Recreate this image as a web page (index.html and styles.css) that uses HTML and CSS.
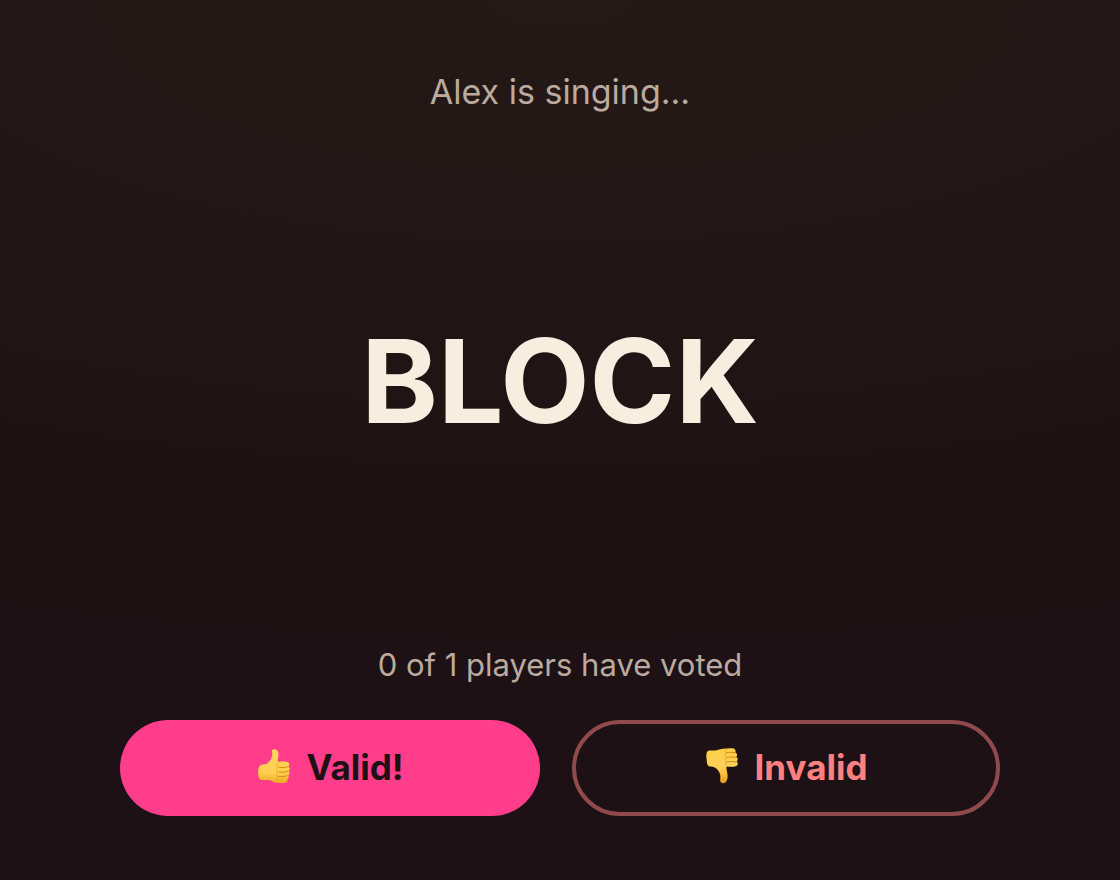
FILE: index.html
```html
<!DOCTYPE html>
<html lang="en">
<head>
  <meta charset="UTF-8">
  <meta name="viewport" content="width=device-width, initial-scale=1">
  <title>Vote</title>
  <link rel="stylesheet" href="styles.css">
</head>
<body>
  <main class="screen">
    <p class="status">Alex is singing...</p>
    <h1 class="word">BLOCK</h1>
    <section class="voting">
      <p class="count">0 of 1 players have voted</p>
      <div class="vote-buttons">
        <button class="button valid" type="button">
          <svg class="thumb" viewBox="7 8 34 38" aria-hidden="true">
            <defs>
              <linearGradient id="skin-up" x1="0" y1="0" x2="0" y2="1">
                <stop offset="0" stop-color="#ffd55c"/>
                <stop offset="0.7" stop-color="#ffcf50"/>
                <stop offset="1" stop-color="#eda820"/>
              </linearGradient>
            </defs>
            <path fill="url(#skin-up)" d="M23 10.500c.8-1.700 3.400-1.800 4.800-.4 1.700 1.700 2 4.400 1.500 7-.3 1.700-.6 3.300-.2 4.900 2.900-.5 6.900-.6 9.300.1 2.300.7 2.600 3.200.9 4.500 1.800.9 1.900 3.400.3 4.500 1.300 1.100 1.200 3.200-.4 4.200.8 1.200.7 3-.8 3.700 .6 1.700-.4 3.500-2.300 3.800-3.300.5-7.600.4-10.600-.5-2.300-.7-3.600-1.900-5.500-2.200-2.600-.4-5.500.1-8-.4-2.200-.5-3-3.500-2.900-7.200.1-4 .9-7 3.500-7.700 2.200-.6 4.400-.1 5.900-1.500 2.100-2 4.100-4.700 4.700-7.600.4-2-.5-4 -.2-5.200z"/>
            <path fill="none" stroke="#d18a17" stroke-width="1" stroke-linecap="round" d="M30 27.200c3 .5 6.500.3 9-.5M30 32c3 .5 6.500.2 9-.7M29.500 36.300c3 .5 6.300.3 8.600-.7"/>
            <path fill="none" stroke="#e5a52b" stroke-width=".8" stroke-linecap="round" d="M29 22.300c-1.800 1-2 3.600-.5 4.800-1.200 1.300-1.200 3.700 0 4.800-1 1.200-1 3.100.2 4.300-.8 1.400-.5 3 .6 4"/>
          </svg>
          <span>Valid!</span>
        </button>
        <button class="button invalid" type="button">
          <svg class="thumb" viewBox="7 8 34 38" aria-hidden="true">
            <defs>
              <linearGradient id="skin-down" x1="0" y1="0" x2="0" y2="1">
                <stop offset="0" stop-color="#ffce45"/>
                <stop offset="0.5" stop-color="#ffd35a"/>
                <stop offset="0.75" stop-color="#f9bc36"/>
                <stop offset="1" stop-color="#e89a16"/>
              </linearGradient>
            </defs>
            <path fill="url(#skin-down)" d="M9.500 18.500C8.900 14 9.600 11 12.200 10.600c2.600-.4 5.200.3 8.200-.6 4.600-1.400 10.300-2.200 15-1.700 2.600.3 3.700 2.100 2.900 4.200 1.900.7 2.300 3 1 4.400 1.700 1 1.900 3.200.4 4.500 1.800 1.200 1.300 4.300-1 4.900-2.500.7-6.500.6-9 .2-.8 2.400.8 5.800.9 9 .1 3.500-1 7.500-4.200 7.700-2.200.1-3.500-1.400-3.200-3.500.3-2.300.4-4.500-.6-6.600-1.200-2.500-2.800-5-5.400-5.900-2.200-.7-4.300.2-6-1.400-1.300-1.300-1.400-5-1.700-7.300z"/>
            <path fill="none" stroke="#d18a17" stroke-width="1" stroke-linecap="round" d="M29.300 12.900c3-.6 6-.7 8.700-.2M29.300 17.500c3.200-.6 6.500-.6 9.600-.1M29.600 22c3.300-.6 6.500-.6 9.700-.1"/>
            <path fill="none" stroke="#e5a52b" stroke-width=".8" stroke-linecap="round" d="M29.300 9.400c-1.100 1-1.100 2.500-.2 3.500-1.300 1.300-1.200 3.400-.1 4.600-1.100 1.300-1 3.300.2 4.600-.9 1.400-.6 3.100.8 4.200"/>
          </svg>
          <span>Invalid</span>
        </button>
      </div>
    </section>
  </main>
</body>
</html>
```

FILE: styles.css
```css
* {
  box-sizing: border-box;
}
body {
  margin: 0;
  font-family: Inter, "Liberation Sans", sans-serif;
  color: #f8eee0;
  background: radial-gradient(ellipse 160% 75% at 50% 0, #241916, #1f1414 65%, #1d1115) #1d1115;
}
.screen {
  display: flex;
  flex-direction: column;
  justify-content: space-between;
  min-height: 100vh;
  padding: 64px 120px;
  text-align: center;
}
.status {
  margin: 0;
  font-size: 34px;
  line-height: 56px;
  color: #bbaa9e;
}
.word {
  margin: 0;
  font-size: 116px;
  font-weight: 700;
  line-height: 144px;
}
.count {
  margin: 0 0 32px;
  font-size: 31px;
  line-height: 46px;
  color: #bbaa9e;
}
.vote-buttons {
  display: flex;
  gap: 32px;
}
.button {
  display: flex;
  flex: 1;
  align-items: center;
  justify-content: center;
  gap: 16px;
  height: 96px;
  padding: 0 0 2px;
  border: 0;
  border-radius: 48px;
  font-family: inherit;
  font-size: 35px;
  font-weight: 700;
  cursor: pointer;
}
.valid {
  color: #1d1115;
  background: #ff3d8b;
}
.invalid {
  color: #ff8080;
  background: transparent;
  border: 4px solid #904a4d;
}
.thumb {
  width: 34px;
  height: 38px;
}
```
